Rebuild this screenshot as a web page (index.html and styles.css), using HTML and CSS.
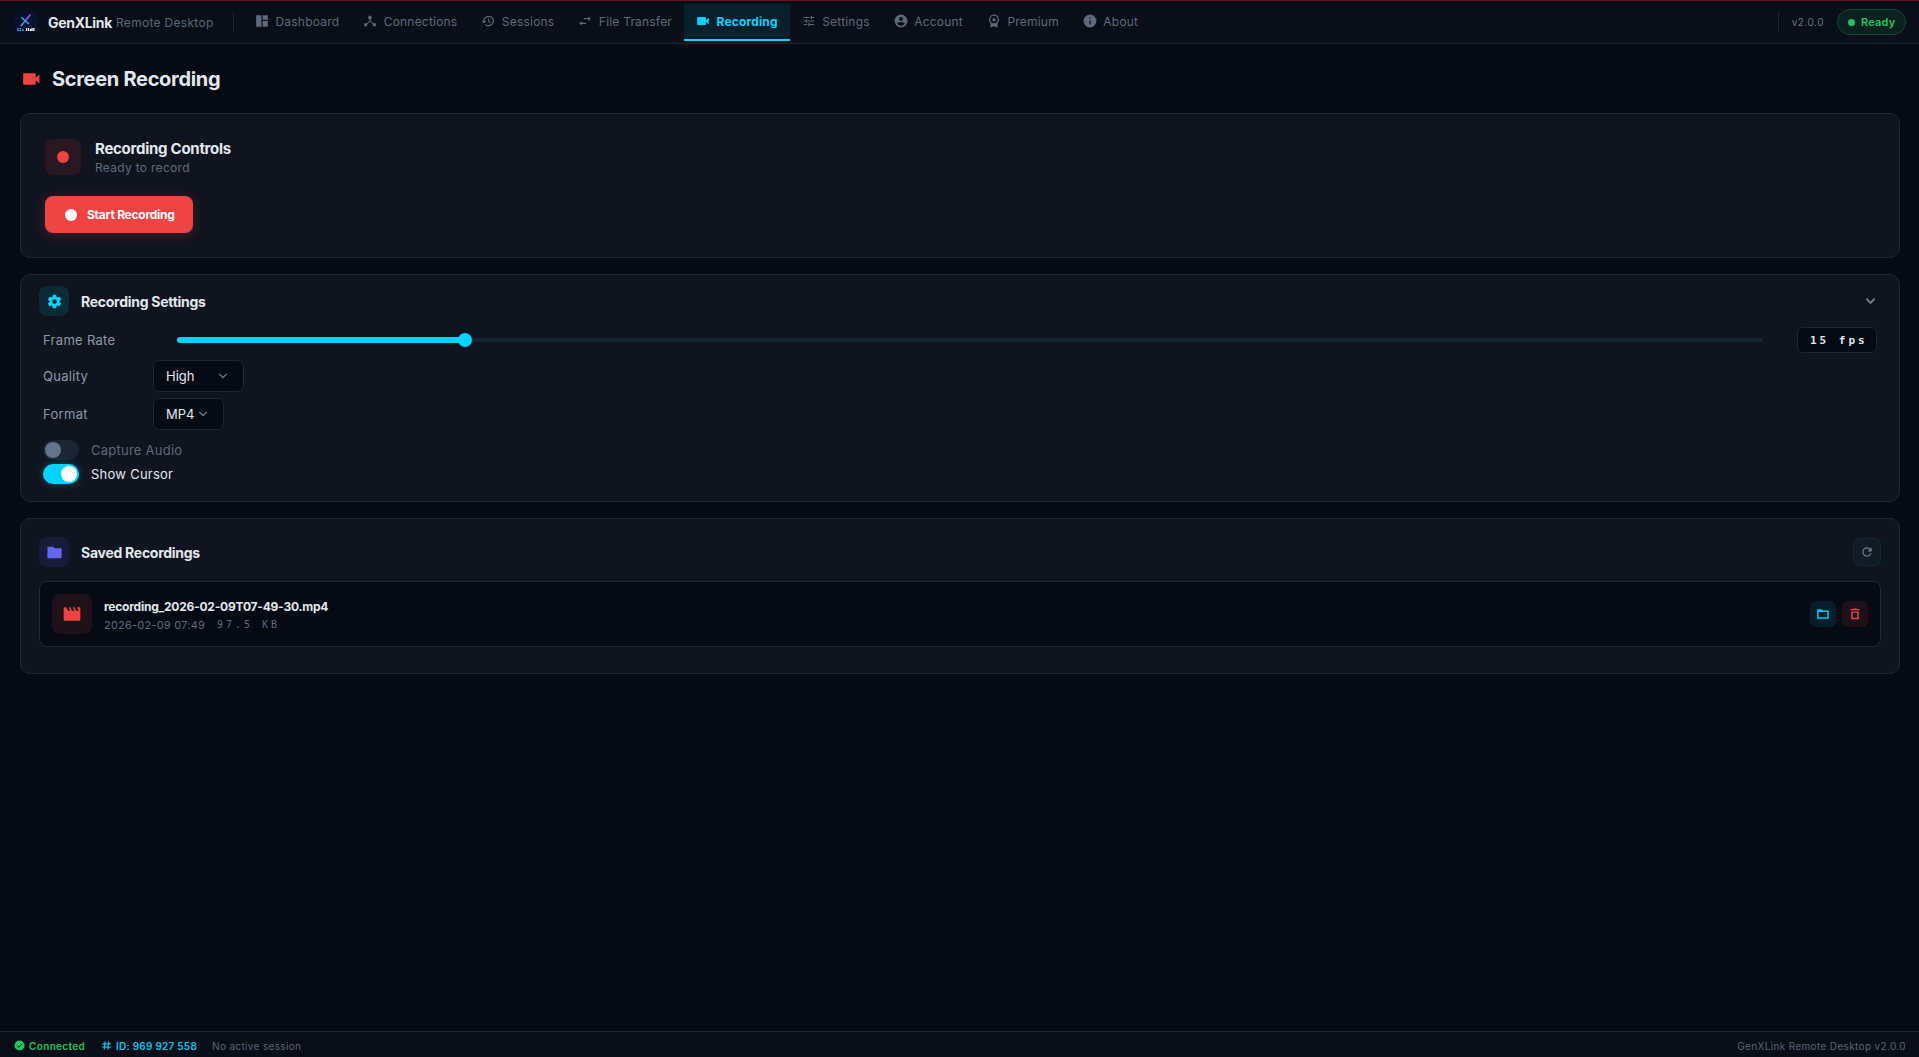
FILE: index.html
```html
<!DOCTYPE html>
<html lang="en">
  <head>
    <meta charset="utf-8" />
    <title>GenXLink Remote Desktop</title>
    <link rel="stylesheet" href="styles.css">
  </head>

  <body>
    <header class="topbar">
      <svg class="logo" viewBox="0 0 22 22">
        <defs>
          <linearGradient id="x-line" x1="0" y1="1" x2="1" y2="0">
            <stop offset="0" stop-color="#22b8f5" />
            <stop offset=".5" stop-color="#4a6cf0" />
            <stop offset="1" stop-color="#d13ae0" />
          </linearGradient>
        </defs>
        <rect width="22" height="22" rx="5" fill="#071230" />
        <path d="M6 15 15.5 3.5" stroke="url(#x-line)" stroke-width="1.6" />
        <path d="M6.5 6.5 14 13" stroke="#31a9f5" stroke-width="1.6" />
        <path d="M3 17v3M4.500 17.500h1.500M4.500 19.500h1.500M8 18v2" stroke="#35bdf5" stroke-width="1.2" />
        <path d="M11.500 17v3M13.500 17v3M15.500 18v2M17 17v3M18.800 17v3" stroke="#fff" stroke-width="1.300" />
      </svg>
      <span class="brand">GenXLink</span>
      <span class="brand-sub">Remote Desktop</span>
      <nav class="tabs">
        <a class="tab"><svg viewBox="0 0 24 24"><path d="M2 2h9v20H2zM13 2h9v8h-9zM13 12h9v10h-9z" /></svg><span>Dashboard</span></a>
        <a class="tab"><svg viewBox="0 0 24 24"><path d="M17 16l-4-4V8.820A3 3 0 1 0 11 8.820V12l-4 4H2v5h5v-3l5-5.300 5 5.300v3h5v-5z" /></svg><span>Connections</span></a>
        <a class="tab"><svg viewBox="0 0 24 24"><path d="M13 3a9 9 0 0 0-9 9H1l4 4 4-4H6a7 7 0 1 1 2.060 4.940l-1.420 1.420A9 9 0 1 0 13 3zm-1 5v5l4.300 2.500.7-1.200-3.500-2.100V8z" /></svg><span>Sessions</span></a>
        <a class="tab"><svg viewBox="0 0 24 24"><path d="M22 8l-4-4v3h-8v2h8v3zM2 16l4 4v-3h8v-2H6v-3z" /></svg><span>File Transfer</span></a>
        <a class="tab active"><svg viewBox="0 0 24 24"><path d="M17 10.500V7a2 2 0 0 0-2-2H4a2 2 0 0 0-2 2v10a2 2 0 0 0 2 2h11a2 2 0 0 0 2-2v-3.500l5 4v-11z" /></svg><span>Recording</span></a>
        <a class="tab"><svg viewBox="0 0 24 24"><path d="M3 17v2h6v-2zM3 5v2h10V5zm10 16v-2h8v-2h-8v-2h-2v6zM7 9v2H3v2h4v2h2V9zm14 4v-2H11v2zm-6-4h2V7h4V5h-4V3h-2z" /></svg><span>Settings</span></a>
        <a class="tab"><svg viewBox="0 0 24 24"><path d="M12 1a11 11 0 1 0 0 22 11 11 0 0 0 0-22zm0 4a3.500 3.500 0 1 1 0 7 3.500 3.500 0 0 1 0-7zm0 15.200a8 8 0 0 1-6.500-3.500c.1-2 4.400-3.200 6.500-3.200s6.400 1.200 6.500 3.200A8 8 0 0 1 12 20.200z" /></svg><span>Account</span></a>
        <a class="tab"><svg viewBox="0 0 24 24"><path fill-rule="evenodd" d="M12 1a8.500 8.500 0 0 0-6 14.500V23l6-2 6 2v-7.500A8.500 8.500 0 0 0 12 1zm0 2.200a6.300 6.300 0 1 1 0 12.600 6.300 6.300 0 0 1 0-12.600zm0 2.300-1.200 2.700-2.900.3 2.200 1.900-.7 2.900 2.600-1.500 2.600 1.500-.7-2.900 2.200-1.900-2.900-.3z" /></svg><span>Premium</span></a>
        <a class="tab"><svg viewBox="0 0 24 24"><path fill-rule="evenodd" d="M12 1a11 11 0 1 0 0 22 11 11 0 0 0 0-22zm-1 5h2v2h-2zm0 4.500h2V18h-2z" /></svg><span>About</span></a>
      </nav>
      <div class="topbar-right">
        <span class="version">v2.0.0</span>
        <span class="ready"><i></i>Ready</span>
      </div>
    </header>

    <main class="content">
      <h1 class="page-title">
        <svg viewBox="0 0 24 24"><path d="M17 10.500V6a1 1 0 0 0-1-1H3a1 1 0 0 0-1 1v12a1 1 0 0 0 1 1h13a1 1 0 0 0 1-1v-4.500l4.500 4v-11z" /></svg>
        <span>Screen Recording</span>
      </h1>

      <section class="card controls">
        <div class="controls-head">
          <div class="tile red"><i class="dot"></i></div>
          <div>
            <h2>Recording Controls</h2>
            <p>Ready to record</p>
          </div>
        </div>
        <button class="start" type="button"><i class="dot"></i><span>Start Recording</span></button>
      </section>

      <section class="card settings">
        <div class="card-head">
          <div class="tile cyan">
            <svg viewBox="0 0 24 24"><path d="M19.140 12.940a7 7 0 0 0 0-1.880l2.030-1.580a.5.5 0 0 0 .12-.61l-1.920-3.320a.5.5 0 0 0-.59-.22l-2.390.96a7 7 0 0 0-1.620-.94l-.36-2.540a.5.5 0 0 0-.48-.41h-3.840a.5.5 0 0 0-.47.41l-.36 2.540a7 7 0 0 0-1.620.94l-2.390-.96a.5.5 0 0 0-.59.22L2.740 8.870a.5.5 0 0 0 .12.61l2.030 1.580a7 7 0 0 0 0 1.880l-2.030 1.580a.5.5 0 0 0-.12.61l1.920 3.320c.12.22.37.29.59.22l2.390-.96c.5.38 1.030.7 1.620.94l.36 2.540c.05.24.24.41.48.41h3.840c.24 0 .44-.17.47-.41l.36-2.540a7 7 0 0 0 1.620-.94l2.390.96c.22.08.47 0 .59-.22l1.920-3.320a.5.5 0 0 0-.12-.61zM12 15.200a3.200 3.200 0 1 1 0-6.400 3.200 3.200 0 0 1 0 6.400z" /></svg>
          </div>
          <h2>Recording Settings</h2>
          <svg class="chevron" viewBox="0 0 12 8"><path d="M1.500 1.500 6 6l4.500-4.500" /></svg>
        </div>
        <div class="field frame-rate">
          <label>Frame Rate</label>
          <div class="slider"><div class="fill"></div><div class="thumb"></div><div class="rest"></div></div>
          <span class="fps">15 fps</span>
        </div>
        <div class="field">
          <label>Quality</label>
          <div class="select quality">High<svg class="chevron" viewBox="0 0 12 8"><path d="M1.500 1.500 6 6l4.500-4.500" /></svg></div>
        </div>
        <div class="field">
          <label>Format</label>
          <div class="select format">MP4<svg class="chevron" viewBox="0 0 12 8"><path d="M1.500 1.500 6 6l4.500-4.500" /></svg></div>
        </div>
        <div class="toggles">
          <div class="toggle"><span class="switch"><i></i></span><span>Capture Audio</span></div>
          <div class="toggle on"><span class="switch"><i></i></span><span>Show Cursor</span></div>
        </div>
      </section>

      <section class="card saved">
        <div class="card-head">
          <div class="tile indigo">
            <svg viewBox="0 0 24 24"><path d="M10 4H3a1 1 0 0 0-1 1v14a1 1 0 0 0 1 1h18a1 1 0 0 0 1-1V7a1 1 0 0 0-1-1h-9z" /></svg>
          </div>
          <h2>Saved Recordings</h2>
          <button class="refresh" type="button"><svg viewBox="0 0 24 24"><path d="M17.650 6.350A8 8 0 1 0 19.730 14h-2.080A6 6 0 1 1 12 6c1.660 0 3.140.69 4.220 1.780L13 11h7V4z" /></svg></button>
        </div>
        <div class="file">
          <div class="tile movie">
            <svg viewBox="0 0 24 24"><path d="M18 4l2 4h-3l-2-4h-2l2 4h-3l-2-4H8l2 4H7L5 4H2v15a1 1 0 0 0 1 1h18a1 1 0 0 0 1-1V4z" /></svg>
          </div>
          <div class="file-info">
            <div class="file-name">recording_2026-02-09T07-49-30.mp4</div>
            <div class="file-meta"><span class="date">2026-02-09 07:49</span><span class="size">97.5 KB</span></div>
          </div>
          <div class="file-actions">
            <button class="open" type="button"><svg viewBox="0 0 24 24"><path fill-rule="evenodd" d="M10 4H2v16h20V6H12zM4.500 8.500h15v9h-15z" /></svg></button>
            <button class="delete" type="button"><svg viewBox="0 0 24 24"><path fill-rule="evenodd" d="M15.500 3.500l-1-1h-5l-1 1H4v2h16v-2zM5.500 7.500V21h13V7.500zm2.500 2.500h8v8.500H8z" /></svg></button>
          </div>
        </div>
      </section>
    </main>

    <footer class="statusbar">
      <span class="connected"><svg viewBox="0 0 24 24"><circle cx="12" cy="12" r="11" /><path d="M7 12.500l3.500 3.500 7-7.500" /></svg>Connected</span>
      <span class="device-id"><svg viewBox="0 0 24 24"><path d="M9 3 7 21M17 3l-2 18M3 8.500h18M3 15.500h18" /></svg>ID: 969 927 558</span>
      <span class="session">No active session</span>
      <span class="product">GenXLink Remote Desktop v2.0.0</span>
    </footer>
  </body>
</html>
```
FILE: styles.css
```css
* {
  box-sizing: border-box;
}

body {
  margin: 0;
  height: 100vh;
  display: flex;
  flex-direction: column;
  background: #060a13;
  color: #e2e8f0;
  font-family: Inter, sans-serif;
  font-size: 13px;
  overflow: hidden;
}

svg {
  display: block;
  flex: none;
  fill: currentColor;
}

h1, h2, p {
  margin: 0;
}

button {
  border: none;
  padding: 0;
  font-family: inherit;
}

/* top bar */
.topbar {
  height: 44px;
  flex: none;
  display: flex;
  align-items: center;
  padding: 0 13px 0 15px;
  background: #0a0e19;
  border-top: 1px solid #6b151b;
  border-bottom: 1px solid #1c2633;
}

.logo {
  width: 22px;
  height: 22px;
}

.brand {
  margin-left: 11px;
  width: 68px;
  font-size: 14px;
  font-weight: 700;
  letter-spacing: -0.3px;
}

.brand-sub {
  width: 117px;
  font-size: 12px;
  letter-spacing: 0.3px;
  color: #5c6677;
}

.tabs {
  display: flex;
  border-left: 1px solid #1b2330;
  height: 20px;
  align-items: center;
  padding-left: 9px;
}

.tab {
  height: 37px;
  display: flex;
  align-items: center;
  gap: 6.5px;
  padding: 0 12px;
  border-bottom: 2px solid transparent;
  font-size: 12px;
  letter-spacing: 0.2px;
  color: #5e6979;
  white-space: nowrap;
}

.tab svg {
  width: 14px;
  height: 14px;
}

.tab.active {
  background: #08202c;
  border-color: #00d4ff;
  color: #00d4ff;
  font-weight: 700;
  letter-spacing: 0.15px;
}

.topbar-right {
  margin-left: auto;
  display: flex;
  align-items: center;
}

.version {
  border-left: 1px solid #1b2330;
  height: 20px;
  line-height: 20px;
  padding: 0 13px 0 13px;
  font-size: 10px;
  letter-spacing: 0.5px;
  color: #6a7485;
}

.ready {
  width: 69px;
  height: 26px;
  display: flex;
  align-items: center;
  gap: 6px;
  padding-left: 10px;
  border: 1px solid #124c31;
  border-radius: 13px;
  background: #0b211f;
  color: #22c55e;
  font-size: 11px;
  font-weight: 600;
  letter-spacing: 0.2px;
}

.ready i {
  width: 7px;
  height: 7px;
  border-radius: 50%;
  background: #22c55e;
}

/* page */
.content {
  flex: 1;
  padding: 0 19px 0 20px;
}

.page-title {
  height: 69px;
  display: flex;
  align-items: center;
  gap: 10px;
  padding-left: 1px;
  font-size: 20px;
  font-weight: 700;
  letter-spacing: -0.3px;
}

.page-title svg {
  width: 21px;
  height: 20px;
  color: #ef4444;
}

.card {
  background: #10141f;
  border: 1px solid #212731;
  border-radius: 10px;
  margin-bottom: 16px;
}

.controls {
  height: 145px;
  padding: 25px 24px;
}

.controls-head {
  display: flex;
  gap: 14px;
}

.controls h2 {
  font-size: 15px;
  line-height: 20px;
  letter-spacing: -0.27px;
}

.controls p {
  font-size: 12px;
  line-height: 18px;
  letter-spacing: 0.3px;
  color: #5f6a7c;
}

.dot {
  width: 12px;
  height: 12px;
  border-radius: 50%;
  background: currentColor;
}

.tile {
  width: 30px;
  height: 30px;
  flex: none;
  display: flex;
  align-items: center;
  justify-content: center;
  border-radius: 8px;
}

.tile svg {
  width: 17px;
  height: 17px;
}

.tile.red {
  width: 36px;
  height: 36px;
  background: #291721;
  color: #ef4444;
}

.tile.cyan {
  background: #0d2a37;
  color: #00d4ff;
}

.tile.indigo {
  background: #191c39;
  color: #6366f1;
}

.start {
  width: 148px;
  height: 37px;
  margin-top: 19px;
  display: flex;
  align-items: center;
  gap: 10px;
  padding-left: 20px;
  border-radius: 8px;
  background: #ef4444;
  box-shadow: 0 2px 12px rgba(239, 68, 68, 0.25);
  color: #fff;
  font-size: 12px;
  font-weight: 700;
  letter-spacing: -0.25px;
}

.card-head {
  display: flex;
  align-items: center;
  gap: 12px;
}

.card-head h2 {
  font-size: 14px;
  line-height: 18px;
  padding-top: 1px;
  letter-spacing: -0.27px;
}

.chevron {
  width: 11px;
  height: 8px;
  fill: none;
  stroke: #748092;
  stroke-width: 1.5;
}

/* recording settings */
.settings {
  height: 228px;
  padding: 11px 23px 0 18px;
}

.card-head .chevron {
  margin-left: auto;
  stroke-width: 2;
}

.field {
  display: flex;
  align-items: center;
  height: 38px;
  padding-left: 4px;
}

.field label {
  width: 110px;
  font-size: 13px;
  letter-spacing: 0.3px;
  color: #8d98a9;
}

.frame-rate {
  height: 42px;
  padding-top: 6px;
  margin-bottom: -1px;
}

.slider {
  flex: 1;
  display: flex;
  align-items: center;
  margin: 0 34px 0 24px;
}

.fill {
  width: 282px;
  height: 6px;
  border-radius: 3px 0 0 3px;
  background: #00d4ff;
}

.thumb {
  width: 14px;
  height: 14px;
  margin-left: -1px;
  border-radius: 50%;
  background: #00d4ff;
}

.rest {
  flex: 1;
  height: 4px;
  border-radius: 0 2px 2px 0;
  background: #1a2533;
}

.fps {
  width: 80px;
  height: 26px;
  line-height: 25px;
  margin-right: -1px;
  padding-left: 12px;
  border: 1px solid #1f2631;
  border-radius: 6px;
  background: #060a13;
  font-family: "DejaVu Sans Mono", monospace;
  font-size: 11px;
  font-weight: 700;
  letter-spacing: 3px;
  white-space: pre;
}

.select {
  height: 32px;
  display: flex;
  align-items: center;
  justify-content: space-between;
  padding: 0 15px 0 12px;
  border: 1px solid #1f2631;
  border-radius: 6px;
  background: #060a13;
  font-size: 13px;
}

.select .chevron {
  width: 10px;
}

.quality {
  width: 91px;
}

.format {
  width: 71px;
}

.toggles {
  padding: 5px 0 0 4px;
}

.toggle {
  height: 24px;
  display: flex;
  align-items: center;
  gap: 12px;
  letter-spacing: 0.25px;
  color: #5f6a7b;
}

.switch {
  width: 36px;
  height: 20px;
  display: flex;
  align-items: center;
  padding: 0 2px;
  border-radius: 10px;
  background: #1b2533;
}

.switch i {
  width: 16px;
  height: 16px;
  border-radius: 50%;
  background: #64748b;
}

.toggle.on {
  color: #e2e8f0;
}

.toggle.on .switch {
  justify-content: flex-end;
  background: #00d4ff;
  box-shadow: 0 0 8px rgba(0, 212, 255, 0.3);
}

.toggle.on i {
  background: #fff;
}

/* saved recordings */
.saved {
  height: 156px;
  padding: 18px 18px 0;
}

.refresh {
  width: 28px;
  height: 28px;
  margin-left: auto;
  display: flex;
  align-items: center;
  justify-content: center;
  border: 1px solid #1b2532;
  border-radius: 6px;
  background: #111b27;
  color: #748092;
}

.refresh svg {
  width: 14px;
  height: 14px;
}

.file {
  height: 66px;
  margin-top: 14px;
  display: flex;
  align-items: center;
  gap: 12px;
  padding: 0 12px;
  border: 1px solid #232933;
  border-radius: 8px;
  background: #060a13;
}

.tile.movie {
  width: 40px;
  height: 40px;
  background: #1f1119;
  color: #ef4444;
}

.tile.movie svg {
  width: 20px;
  height: 20px;
}

.file-info {
  padding-top: 3px;
}

.file-name {
  font-size: 12px;
  font-weight: 700;
  line-height: 18px;
  letter-spacing: -0.23px;
}

.file-meta {
  display: flex;
  gap: 12px;
  font-size: 11px;
  line-height: 18px;
  color: #5f6979;
}

.date {
  letter-spacing: 0.22px;
}

.size {
  font-family: "DejaVu Sans Mono", monospace;
  font-size: 10px;
  letter-spacing: 3px;
}

.file-actions {
  margin-left: auto;
  display: flex;
  gap: 6px;
}

.file-actions button {
  width: 26px;
  height: 26px;
  display: flex;
  align-items: center;
  justify-content: center;
  border-radius: 6px;
}

.file-actions svg {
  width: 14px;
  height: 14px;
}

.file-actions .open {
  background: #061e29;
  color: #00c8f0;
}

.file-actions .delete {
  background: #1f1119;
  color: #ef4444;
}

/* status bar */
.statusbar {
  height: 26px;
  flex: none;
  display: flex;
  align-items: center;
  padding: 2px 13px 0 14px;
  border-top: 1px solid #1f2530;
  background: #0a0e19;
  font-size: 10px;
  letter-spacing: 0.35px;
  color: #596373;
}

.statusbar span {
  display: flex;
  align-items: center;
}

.statusbar svg {
  width: 11px;
  height: 11px;
}

.connected {
  gap: 4px;
  width: 87px;
  color: #22c55e;
  font-weight: 600;
}

.connected path {
  fill: none;
  stroke: #0a0e19;
  stroke-width: 2;
}

.device-id {
  gap: 4px;
  width: 111px;
  color: #00c6ee;
  font-weight: 600;
  letter-spacing: 0.25px;
}

.device-id path {
  stroke: currentColor;
  stroke-width: 2.4;
}

.product {
  margin-left: auto;
}
```
